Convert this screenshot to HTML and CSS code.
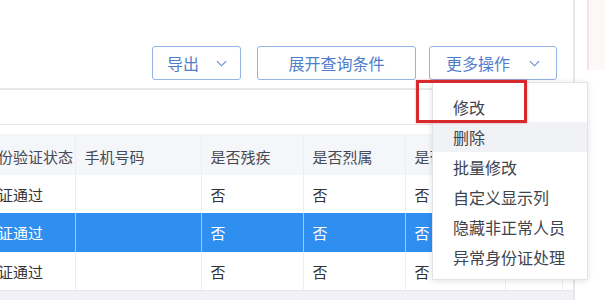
FILE: index.html
```html
<!DOCTYPE html>
<html lang="zh-CN">
<head>
<meta charset="utf-8">
<link rel="stylesheet" href="styles.css">
</head>
<body>
<div class="page">
  <div class="main">
    <div class="toolbar">
      <button class="btn btn-export"><span>导出</span><svg class="chev" viewBox="0 0 12 7" width="11" height="7"><polyline points="1,1 6,6 11,1" fill="none" stroke="#5f86c9" stroke-width="1.2"/></svg></button>
      <button class="btn btn-expand"><span>展开查询条件</span></button>
      <button class="btn btn-more"><span>更多操作</span><svg class="chev" viewBox="0 0 12 7" width="11" height="7"><polyline points="1,1 6,6 11,1" fill="none" stroke="#5f86c9" stroke-width="1.2"/></svg></button>
    </div>
    <div class="spacer"></div>
    <div class="tablewrap">
      <table class="grid">
        <colgroup>
          <col class="c0"><col class="c1"><col class="c2"><col class="c3"><col class="c4"><col class="c5"><col class="c6">
        </colgroup>
        <thead>
          <tr class="head"><th>身份验证状态</th><th>手机号码</th><th>是否残疾</th><th>是否烈属</th><th>是否低保</th><th></th><th></th></tr>
        </thead>
        <tbody>
          <tr class="row r1"><td>验证通过</td><td></td><td>否</td><td>否</td><td>否</td><td></td><td></td></tr>
          <tr class="row r2 selected"><td>验证通过</td><td></td><td>否</td><td>否</td><td>否</td><td></td><td></td></tr>
          <tr class="row r3"><td>验证通过</td><td></td><td>否</td><td>否</td><td>否</td><td></td><td></td></tr>
        </tbody>
      </table>
    </div>
    <div class="footer"></div>
  </div>
  <div class="side"><div class="pink"></div></div>

  <ul class="menu">
    <li>修改</li>
    <li class="hover">删除</li>
    <li>批量修改</li>
    <li>自定义显示列</li>
    <li>隐藏非正常人员</li>
    <li>异常身份证处理</li>
  </ul>
  <div class="redbox"></div>
</div>
</body>
</html>
```

FILE: styles.css
```css
* { box-sizing: border-box; }
html, body { margin: 0; padding: 0; background: #fff; }
body {
  font-family: "Noto Sans CJK SC", "Noto Sans", sans-serif;
  width: 605px;
  height: 300px;
  overflow: hidden;
}
.page {
  position: relative;
  display: flex;
  width: 605px;
  height: 300px;
}
.main {
  width: 573px;
  flex: none;
  display: flex;
  flex-direction: column;
  overflow: hidden;
}
.toolbar {
  height: 90px;
  flex: none;
  display: flex;
  justify-content: flex-end;
  align-items: flex-start;
  padding: 46px 16px 0 0;
  border-bottom: 2px solid #e7e7e7;
}
.btn {
  height: 34px;
  border: 1px solid #94b3e6;
  border-radius: 3px;
  background: #fff;
  color: #4f7dcb;
  font-family: inherit;
  font-size: 16px;
  display: flex;
  align-items: center;
  padding: 0;
  cursor: pointer;
}
.btn span { line-height: 1; }
.btn-export { width: 89px; padding-left: 14px; margin-right: 16px; }
.btn-export .chev { margin-left: 17px; }
.btn-expand { width: 159px; justify-content: center; margin-right: 13px; }
.btn-more { width: 128px; padding-left: 16px; }
.btn-more .chev { margin-left: 19px; }
.spacer {
  height: 35px;
  flex: none;
  border-bottom: 1px solid #e6e8eb;
}
.tablewrap {
  flex: none;
  padding-top: 9px;
  overflow: hidden;
}
.grid {
  margin-left: -26px;
  width: 599px;
  table-layout: fixed;
  border-collapse: collapse;
  font-size: 15px;
  color: #333;
}
.c0 { width: 101px; }
.c1 { width: 126px; }
.c2 { width: 102px; }
.c3 { width: 102px; }
.c4 { width: 100px; }
.c5 { width: 57px; }
.c6 { width: 11px; }
.grid th, .grid td {
  padding: 0 0 0 9px;
  text-align: left;
  white-space: nowrap;
  overflow: hidden;
  border-right: 1px solid #eceef1;
  font-weight: 400;
}
.head th {
  height: 41px;
  background: #f5f6f9;
  color: #454a55;
  padding-top: 4px;
}
.row td { height: 38px; background: #fff; }
.r2 td { height: 39px; }
.selected td {
  background: #2f8ff0;
  color: #fff;
  border-right-color: #9ccaf7;
}
.footer {
  flex: 1;
  background: #f0f2f5;
  border-top: 1px solid #e6e8eb;
}
.side {
  flex: 1;
  border-left: 2px solid #e8e8e8;
  padding: 0 0 0 12px;
}
.pink {
  height: 70px;
  border-left: 2px solid #f6e2e2;
  background: #fdf8f8;
}
.menu {
  position: absolute;
  left: 432px;
  top: 82px;
  width: 156px;
  height: 198px;
  margin: 0;
  padding: 9px 0;
  list-style: none;
  background: #fff;
  border: 1px solid #e3e3e3;
  box-shadow: 0 1px 6px rgba(0, 0, 0, 0.12);
  font-size: 16px;
  color: #3e434d;
}
.menu li {
  height: 30px;
  line-height: 30px;
  padding-left: 20px;
  white-space: nowrap;
}
.menu li.hover { background: #f1f2f5; }
.redbox {
  position: absolute;
  left: 416px;
  top: 80px;
  width: 111px;
  height: 43px;
  border: 3px solid #d7282c;
  box-shadow: 0 0 2px rgba(200, 30, 30, 0.4);
}
```
